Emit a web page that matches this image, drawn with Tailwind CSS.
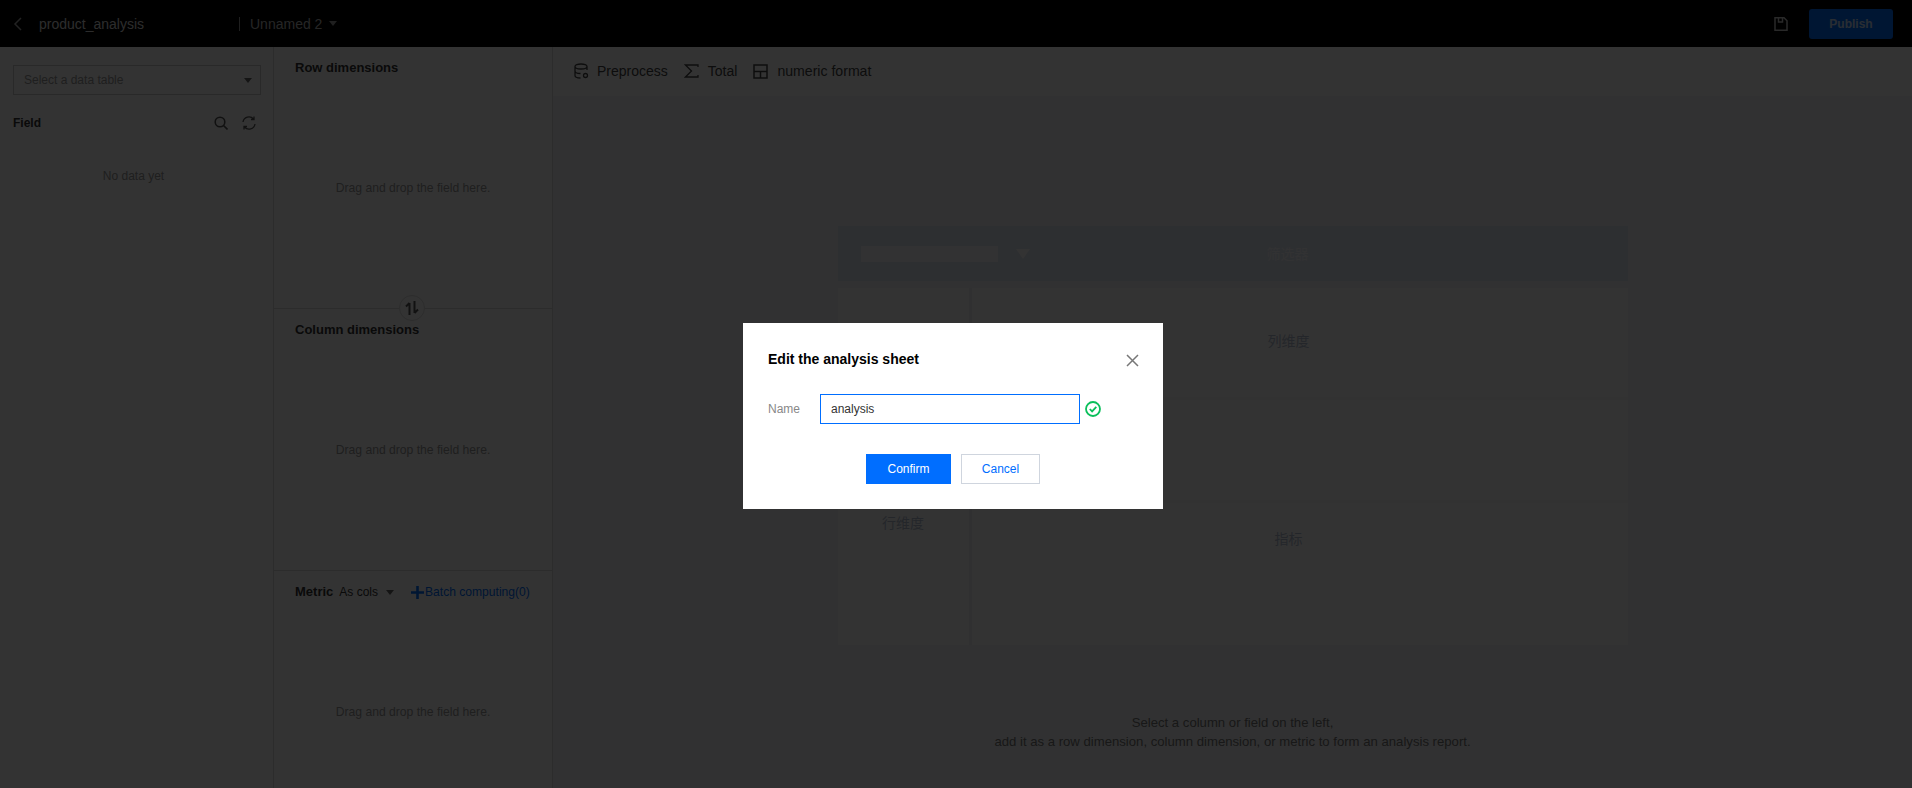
<!DOCTYPE html>
<html lang="en">
<head>
    <meta charset="UTF-8">
    <meta name="viewport" content="width=device-width, initial-scale=1.0">
    <title>Analysis sheet</title>
    <script src="https://cdn.jsdelivr.net/npm/@tailwindcss/browser@4"></script>
</head>
<body class="h-[788px] w-[1912px] overflow-hidden bg-white font-['Liberation_Sans','Noto_Sans_CJK_SC',sans-serif] text-xs text-[#333]">
    <!-- Top bar -->
    <header class="flex h-[47px] items-center bg-black text-white">
        <svg class="ml-[13px] h-[14px] w-[10px]" viewBox="0 0 10 14" fill="none" stroke="#aaa" stroke-width="1.5"><path d="M8 1 2 7l6 6"/></svg>
        <span class="ml-[16px] w-[200px] text-sm text-[#ddd]">product_analysis</span>
        <span class="h-[14px] w-px bg-[#999]"></span>
        <span class="ml-[10px] text-sm text-[#bbb]">Unnamed 2</span>
        <span class="ml-[7px] h-0 w-0 border-x-[4px] border-t-[5px] border-x-transparent border-t-[#999]"></span>
        <svg class="ml-auto h-[16px] w-[16px]" viewBox="0 0 16 16" fill="none" stroke="#ccc" stroke-width="1.5"><path d="M2 1.800h9l3 3v9.400H2zM5.500 2v4h4V2"/></svg>
        <button class="mr-[19px] ml-[20px] h-[30px] w-[84px] rounded-[3px] bg-[#006eff] text-xs font-bold text-white/80">Publish</button>
    </header>

    <div class="flex h-[741px]">
        <!-- Field panel -->
        <aside class="w-[274px] shrink-0 border-r border-[#ddd] pt-[18px] pr-[12px] pl-[13px]">
            <div class="flex h-[30px] items-center justify-between border border-[#ccc] pr-[8px] pl-[10px] text-[#999]">
                <span>Select a data table</span>
                <span class="h-0 w-0 border-x-[4px] border-t-[5px] border-x-transparent border-t-[#666]"></span>
            </div>
            <div class="mt-[18px] flex h-[20px] items-center">
                <span class="font-bold">Field</span>
                <svg class="ml-auto h-[14px] w-[14px]" viewBox="0 0 14 14" fill="none" stroke="#555" stroke-width="1.6"><circle cx="6" cy="6" r="4.800"/><path d="m9.500 9.500 4 4"/></svg>
                <svg class="mr-[5px] ml-[14px] h-[14px] w-[14px]" viewBox="0 0 14 14" fill="none" stroke="#555" stroke-width="1.300"><path d="M1 6a6 6 0 0 1 10.500-3M13 8a6 6 0 0 1-10.500 3M12 .5V3.500H9M2 13.500V10.500h3"/></svg>
            </div>
            <p class="mt-[35px] pr-[7px] text-center text-[#999]">No data yet</p>
        </aside>

        <!-- Dimensions panel -->
        <section class="flex w-[279px] shrink-0 flex-col border-r border-[#ddd]">
            <div class="relative h-[262px] border-b border-[#ddd] px-[21px] pt-[13px]">
                <h3 class="text-[13px] leading-[16px] font-bold">Row dimensions</h3>
                <p class="mt-[104px] text-center text-[12.150px] text-[#999]">Drag and drop the field here.</p>
                <span class="absolute right-[127px] -bottom-[13px] flex h-[26px] w-[26px] items-center justify-center rounded-full border border-[#ddd] bg-white">
                    <svg class="h-[14px] w-[14px]" viewBox="0 0 14 14" fill="none" stroke="#555" stroke-width="2"><path d="M4.500 14V2M1 5.500 4.500 2M9.500 0v12M13 8.500 9.500 12"/></svg>
                </span>
            </div>
            <div class="h-[262px] border-b border-[#ddd] px-[21px] pt-[13px]">
                <h3 class="text-[13px] leading-[16px] font-bold">Column dimensions</h3>
                <p class="mt-[104px] text-center text-[12.150px] text-[#999]">Drag and drop the field here.</p>
            </div>
            <div class="flex-1 px-[21px] pt-[13px]">
                <div class="flex h-[16px] items-center">
                    <h3 class="text-[13px] font-bold">Metric</h3>
                    <span class="ml-[6px]">As cols</span>
                    <span class="ml-[8px] h-0 w-0 border-x-[4px] border-t-[5px] border-x-transparent border-t-[#666]"></span>
                    <svg class="ml-[17px] h-[13px] w-[13px]" viewBox="0 0 13 13" fill="#006eff"><path d="M5.200 0h2.600v5.200H13v2.600H7.800V13H5.200V7.800H0V5.200h5.200z"/></svg>
                    <span class="ml-[1px] text-[12.100px] text-[#006eff]">Batch computing(0)</span>
                </div>
                <p class="mt-[104px] text-center text-[12.150px] text-[#999]">Drag and drop the field here.</p>
            </div>
        </section>

        <!-- Main report area -->
        <main class="flex min-w-0 flex-1 flex-col bg-[#f5f6f8]">
            <div class="flex h-[49px] items-center bg-white pb-[1px] pl-[20px] text-sm text-[#444]">
                <svg class="h-[16px] w-[16px]" viewBox="0 0 16 16" fill="none" stroke="#444" stroke-width="1.300"><path d="M14 7V3.500C14 2 11.300 1 8 1S2 2 2 3.500v9C2 14 4 15 7.500 15M2 8c0 1.500 2.700 2.500 5.500 2.500M2 3.500C2 5 4.700 6 8 6s6-1 6-2.500"/><circle cx="12.500" cy="12.500" r="2"/></svg>
                <span class="ml-[8px]">Preprocess</span>
                <svg class="ml-[16px] h-[16px] w-[16px]" viewBox="0 0 16 16" fill="none" stroke="#444" stroke-width="1.300"><path d="M14 4V2H1.500l6 6-6 6H14v-2"/></svg>
                <span class="ml-[8px]">Total</span>
                <svg class="ml-[16px] h-[15px] w-[15px]" viewBox="0 0 15 15" fill="none" stroke="#444" stroke-width="1.500"><path d="M1 1h13v13H1zM1 7.500h13M7.500 7.500V14"/></svg>
                <span class="ml-[9px] text-[14.100px]">numeric format</span>
            </div>
            <div class="flex flex-1 flex-col items-center">
                <div class="mt-[130px] w-[790px]">
                    <div class="flex h-[55px] items-center bg-[#e1e8f5] pl-[23px]">
                        <span class="h-[16px] w-[137px] bg-[#fafbfc]"></span>
                        <span class="ml-[18px] h-0 w-0 border-x-[7px] border-t-[10px] border-x-transparent border-t-white"></span>
                        <span class="ml-[237px] text-sm text-white/80">筛选器</span>
                    </div>
                    <div class="mt-[7px] grid h-[357px] grid-cols-[131px_1fr] gap-[3px] bg-[#edeff2]">
                        <div class="flex flex-col items-center bg-white pt-[225px] text-sm text-[#b4bed2]">行维度</div>
                        <div class="flex flex-col gap-[3px] bg-[#f7f8fa]">
                            <div class="h-[109px] bg-white pt-[43px] pl-[296px] text-sm text-[#b4bed2]">列维度</div>
                            <div class="h-[100px] bg-white"></div>
                            <div class="flex-1 bg-white pt-[26px] pl-[303px] text-sm text-[#b4bed2]">指标</div>
                        </div>
                    </div>
                </div>
                <p class="mt-[68px] text-center text-[13.150px] leading-[19px] text-[#777]">Select a column or field on the left,<br>add it as a row dimension, column dimension, or metric to form an analysis report.</p>
            </div>
        </main>
    </div>

    <!-- Dialog -->
    <div class="fixed inset-0 bg-black/80"></div>
    <div class="fixed top-[323px] left-[743px] h-[186px] w-[420px] bg-white px-[25px] pt-[26px]">
        <div class="flex items-center justify-between">
            <h2 class="text-sm leading-[20px] font-bold text-black">Edit the analysis sheet</h2>
            <svg class="mt-[3px] -mr-[1px] h-[13px] w-[13px]" viewBox="0 0 13 13" fill="none" stroke="#777" stroke-width="1.500"><path d="m1 1 11 11M12 1 1 12"/></svg>
        </div>
        <div class="mt-[25px] flex items-center">
            <label class="w-[52px] text-[#888]">Name</label>
            <input value="analysis" class="h-[30px] w-[260px] border border-[#006eff] px-[10px] text-xs text-[#333] outline-none">
            <svg class="ml-[5px] h-[16px] w-[16px]" viewBox="0 0 16 16" fill="none" stroke="#0abf5b" stroke-width="1.800"><circle cx="8" cy="8" r="7"/><path d="m4.800 8 2.300 2.400 4.200-4.500"/></svg>
        </div>
        <div class="mt-[30px] flex justify-center gap-[10px]">
            <button class="h-[30px] w-[85px] bg-[#006eff] text-xs text-white">Confirm</button>
            <button class="h-[30px] w-[79px] border border-[#cfd5de] bg-white text-xs text-[#006eff]">Cancel</button>
        </div>
    </div>
</body>
</html>
